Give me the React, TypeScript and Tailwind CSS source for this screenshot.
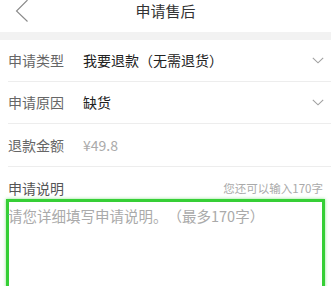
import React from "react";

const Chevron = () => (
  <svg width="12" height="7" viewBox="0 0 12 7" fill="none" className="shrink-0">
    <path d="M0.8 0.8 L6 5.8 L11.2 0.8" stroke="#a0a0a0" strokeWidth="1.1" />
  </svg>
);

export default function App() {
  return (
    <div
      className="w-[331px] h-[286px] overflow-hidden bg-white [text-spacing-trim:space-all]"
      style={{ fontFamily: '"Noto Sans CJK SC", "Noto Sans", sans-serif' }}
    >
      <div className="relative h-[32px] flex justify-center">
        <svg className="absolute left-[15px] top-0" width="14" height="22" viewBox="0 0 14 22" fill="none">
          <path d="M12.5 0 L1.5 11 L12.5 21.5" stroke="#8a8a8a" strokeWidth="1.1" />
        </svg>
        <span className="text-[15px] leading-[22px] text-[#333]">申请售后</span>
      </div>
      <div className="h-[8px] bg-[#f2f2f2]" />
      <div>
        <div className="flex items-center h-[42px] pr-[7px] ml-[8px] border-b border-[#ededed]">
          <span className="w-[75px] text-[14px] text-[#666]">申请类型</span>
          <span className="flex-1 text-[14px] text-[#222]">我要退款（无需退货）</span>
          <Chevron />
        </div>
        <div className="flex items-center h-[42px] pr-[7px] ml-[8px] border-b border-[#ededed]">
          <span className="w-[75px] text-[14px] text-[#666]">申请原因</span>
          <span className="flex-1 text-[14px] text-[#222]">缺货</span>
          <Chevron />
        </div>
        <div className="flex items-center h-[43px] pr-[7px] ml-[8px] border-b border-[#ededed]">
          <span className="w-[75px] text-[14px] text-[#666]">退款金额</span>
          <span className="flex-1 text-[14px] text-[#aaa]">¥49.8</span>
        </div>
        <div className="flex items-end justify-between h-[32px] px-[8px] pb-[2px]">
          <span className="text-[14px] leading-[18px] text-[#555]">申请说明</span>
          <span className="text-[11.5px] leading-[16px] text-[#aaa] mb-[1px]">您还可以输入170字</span>
        </div>
        <div className="ml-[6px] w-[319px] h-[120px] border-[3px] border-[#36cf36] shadow-[0_0_3px_rgba(60,207,60,0.6)] pt-[4px]">
          <span className="block -ml-[1px] text-[14.5px] leading-[20px] text-[#aaa]">请您详细填写申请说明。（最多170字）</span>
        </div>
      </div>
    </div>
  );
}
